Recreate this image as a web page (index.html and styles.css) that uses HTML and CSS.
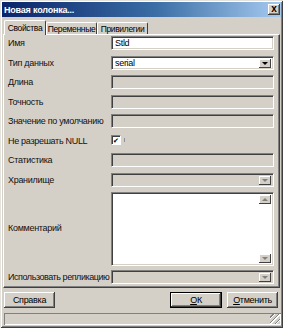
FILE: index.html
```html
<!DOCTYPE html>
<html lang="ru">
<head>
    <meta charset="UTF-8">
    <title>Новая колонка...</title>
    <link rel="stylesheet" href="styles.css">
</head>
<body>
    <div class="window">
        <div class="titlebar">
            <span class="title">Новая колонка...</span>
            <span class="close">x</span>
        </div>
        <div class="tabs">
            <div class="tab active">Свойства</div>
            <div class="tab">Переменные</div>
            <div class="tab">Привилегии</div>
        </div>
        <div class="panel">
            <div class="form">
                <label>Имя</label>
                <div class="field">Stld</div>

                <label>Тип данных</label>
                <div class="field select">serial<span class="drop"><i></i></span></div>

                <label>Длина</label>
                <div class="field disabled"></div>

                <label>Точность</label>
                <div class="field disabled"></div>

                <label>Значение по умолчанию</label>
                <div class="field disabled"></div>

                <label>Не разрешать NULL</label>
                <div class="check-row"><span class="check">&#10004;</span><span class="focus-mark"></span></div>

                <label>Статистика</label>
                <div class="field disabled"></div>

                <label>Хранилище</label>
                <div class="field select disabled"><span class="drop"><i></i></span></div>

                <label class="tall">Комментарий</label>
                <div class="field memo tall">
                    <span class="scroll up"><i></i></span>
                    <span class="scroll down"><i></i></span>
                </div>

                <label class="long">Использовать репликацию</label>
                <div class="field select disabled"><span class="drop"><i></i></span></div>
            </div>
        </div>
        <div class="footer">
            <button class="btn">Справка</button>
            <span class="spacer"></span>
            <button class="btn default"><u>О</u>К</button>
            <button class="btn"><u>О</u>тменить</button>
        </div>
        <div class="statusbar"><span class="grip"></span></div>
    </div>
</body>
</html>
```

FILE: styles.css
```css
body {
    margin: 0;
    background-color: #d4d0c8;
    font-family: "Liberation Sans", Arial, sans-serif;
    font-size: 9px;
    letter-spacing: -0.3px;
    color: #000;
}
.window {
    width: 283px;
    height: 328px;
    box-sizing: border-box;
    padding: 2px;
    display: flex;
    flex-direction: column;
    box-shadow: inset 1px 1px #e4e2dc, inset -1px -1px #404040, inset 2px 2px #ffffff, inset -2px -2px #808080;
}
.titlebar {
    height: 15px;
    background: linear-gradient(to right, #0a246a, #3a6ea5 55%, #a6caf0);
    display: flex;
    align-items: center;
    justify-content: space-between;
    padding: 0 1px 0 2px;
}
.title {
    color: #fff;
    font-weight: bold;
    font-size: 9px;
    letter-spacing: -0.2px;
}
.close {
    width: 12px;
    height: 11px;
    box-sizing: border-box;
    background-color: #d4d0c8;
    box-shadow: inset -1px -1px #404040, inset 1px 1px #fff, inset -2px -2px #808080;
    font-weight: bold;
    font-size: 10px;
    letter-spacing: 0;
    line-height: 9px;
    text-align: center;
}
.tabs {
    display: flex;
    margin-top: 3px;
    padding-left: 2px;
    height: 14px;
    align-items: flex-end;
    position: relative;
    z-index: 1;
}
.tab {
    width: 51px;
    box-sizing: border-box;
    height: 12px;
    line-height: 12px;
    font-size: 8.5px;
    letter-spacing: -0.35px;
    text-align: center;
    white-space: nowrap;
    border-top: 1px solid #fff;
    border-left: 1px solid #fff;
    border-right: 1px solid #404040;
    border-radius: 2px 2px 0 0;
}
.tab.active {
    width: 42px;
    height: 15px;
    line-height: 14px;
    margin-bottom: -1px;
    background-color: #d4d0c8;
}
.panel {
    height: 254px;
    box-sizing: border-box;
    margin: 0 1px;
    border-top: 1px solid #fff;
    border-left: 1px solid #fff;
    border-right: 1px solid #404040;
    border-bottom: 1px solid #404040;
    box-shadow: inset -1px -1px #808080;
    padding: 1px 0 0 4px;
}
.form {
    display: grid;
    grid-template-columns: 103px 163px;
    grid-auto-rows: 14px;
    row-gap: 5.5px;
    align-items: center;
}
.form label {
    white-space: nowrap;
    color: #111;
}
.form .long {
    letter-spacing: -0.45px;
}
.form .tall {
    grid-row: span 4;
}
.field {
    height: 14px;
    box-sizing: border-box;
    background-color: #fff;
    border-top: 1px solid #808080;
    border-left: 1px solid #808080;
    border-right: 1px solid #fff;
    border-bottom: 1px solid #fff;
    box-shadow: inset 1px 1px #404040, inset -1px -1px #d4d0c8;
    padding: 0 3px;
    line-height: 12px;
    position: relative;
}
.field.disabled {
    background-color: #d4d0c8;
}
.field.memo {
    height: 74px;
    align-self: start;
}
.drop, .scroll {
    position: absolute;
    right: 2px;
    top: 2px;
    width: 12px;
    height: 9px;
    background-color: #d4d0c8;
    box-shadow: inset -1px -1px #404040, inset 1px 1px #fff;
    display: flex;
    align-items: center;
    justify-content: center;
}
.drop i, .scroll i {
    width: 0;
    height: 0;
    border-left: 3px solid transparent;
    border-right: 3px solid transparent;
    border-top: 3px solid #000;
}
.disabled .drop i {
    border-top-color: #808080;
}
.scroll.up i {
    border-top: none;
    border-bottom: 3px solid #808080;
}
.scroll.down {
    top: auto;
    bottom: 2px;
}
.scroll.down i {
    border-top-color: #808080;
}
.check-row {
    height: 11px;
    display: flex;
    align-items: center;
    gap: 3px;
}
.form .check-row {
    align-self: start;
    margin-top: 1px;
}
.check {
    width: 10px;
    height: 10px;
    box-sizing: border-box;
    background-color: #fff;
    border-top: 1px solid #808080;
    border-left: 1px solid #808080;
    border-right: 1px solid #fff;
    border-bottom: 1px solid #fff;
    box-shadow: inset 1px 1px #404040;
    font-size: 7px;
    letter-spacing: 0;
    line-height: 9px;
    text-align: center;
}
.focus-mark {
    width: 1px;
    height: 4px;
    background-color: #909090;
}
.footer {
    display: flex;
    margin-top: 4px;
    padding: 0 3px 0 2px;
    gap: 5px;
}
.spacer {
    flex: 1;
}
.btn {
    height: 16px;
    width: 51px;
    padding: 0;
    background-color: #d4d0c8;
    border: none;
    box-shadow: inset -1px -1px #404040, inset 1px 1px #fff, inset -2px -2px #808080;
    font-family: "Liberation Sans", Arial, sans-serif;
    font-size: 9px;
    letter-spacing: -0.3px;
    color: #000;
}
.btn.default {
    width: 52px;
    box-shadow: inset 0 0 0 1px #000, inset -2px -2px #404040, inset 2px 2px #fff, inset -3px -3px #808080;
}
.btn u {
    text-decoration: underline;
}
.statusbar {
    margin: 5px 0 0 2px;
    height: 12px;
    box-shadow: inset 1px 1px #808080, inset -1px -1px #fff;
    position: relative;
}
.grip {
    position: absolute;
    right: 1px;
    bottom: 1px;
    width: 10px;
    height: 10px;
    background: repeating-linear-gradient(135deg, transparent 0 2px, #808080 2px 3px, #fff 3px 4px);
}
```
